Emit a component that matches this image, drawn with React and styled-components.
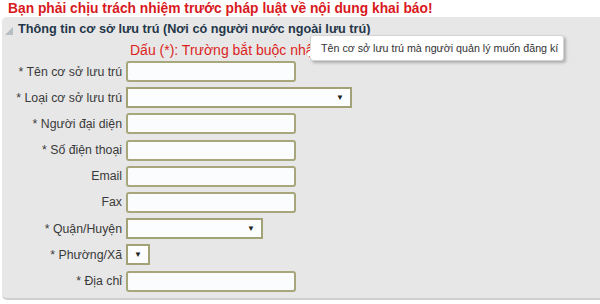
import styled, { createGlobalStyle } from 'styled-components';

const GlobalStyle = createGlobalStyle`
  html, body {
    margin: 0;
    padding: 0;
    background: #ffffff;
    font-family: "Liberation Sans", Arial, sans-serif;
  }
`;

const fields = [
  { label: '* Tên cơ sở lưu trú', kind: 'input' },
  { label: '* Loại cơ sở lưu trú', kind: 'select', width: 226 },
  { label: '* Người đại diện', kind: 'input' },
  { label: '* Số điện thoại', kind: 'input' },
  { label: 'Email', kind: 'input' },
  { label: 'Fax', kind: 'input' },
  { label: '* Quận/Huyện', kind: 'select', width: 137 },
  { label: '* Phường/Xã', kind: 'select', width: 24 },
  { label: '* Địa chỉ', kind: 'input' },
];

function App(){
  return(
    <Page>
      <GlobalStyle />
      <Warning>Bạn phải chịu trách nhiệm trước pháp luật về nội dung khai báo!</Warning>
      <Panel>
        <Legend>
          <Caret viewBox="0 0 8 8">
            <path d="M8 0 L8 8 L0 8 Z" fill="#b4bcc4" />
          </Caret>
          Thông tin cơ sở lưu trú (Nơi có người nước ngoài lưu trú)
        </Legend>
        <Note>Dấu (*): Trường bắt buộc nhập</Note>
        <Form>
          { fields.map((f) => (
            <Row key={ f.label }>
              <Label>{ f.label }</Label>
              { f.kind === 'input'
                ? <TextBox />
                : <SelectBox $width={ f.width }><Arrow>▼</Arrow></SelectBox> }
            </Row>
          )) }
        </Form>
        <Tooltip>
          <Tail />
          Tên cơ sở lưu trú mà người quản lý muốn đăng kí
        </Tooltip>
      </Panel>
    </Page>
  );
};

export default App;

const Page = styled.div`
  width: 600px;
  height: 304px;
  overflow: hidden;
  background: #ffffff;
`;

const Warning = styled.div`
  padding: 1px 0 0 8px;
  height: 16px;
  font-size: 13.8px;
  font-weight: bold;
  color: #d8191d;
  white-space: nowrap;
`;

const Panel = styled.div`
  position: relative;
  margin-left: 2px;
  width: 620px;
  background: #e7e7e7;
  border-radius: 5px 0 0 5px;
  border-bottom: 2px solid #cfcfcf;
  padding: 3px 0 6px 0;
`;

const Legend = styled.div`
  display: flex;
  align-items: center;
  gap: 5px;
  padding-left: 3px;
  height: 18px;
  font-size: 12.7px;
  font-weight: bold;
  color: #243649;
  white-space: nowrap;
`;

const Caret = styled.svg`
  width: 8px;
  height: 8px;
  margin-top: 4px;
`;

const Note = styled.div`
  margin-top: 2px;
  padding-left: 128px;
  height: 21px;
  font-size: 14px;
  color: #dc1f22;
  line-height: 20px;
  white-space: nowrap;
`;

const Form = styled.div`
  display: flex;
  flex-direction: column;
  gap: 5.2px;
`;

const Row = styled.div`
  display: grid;
  grid-template-columns: 120px auto;
  column-gap: 4px;
  align-items: center;
  height: 21px;
`;

const Label = styled.span`
  text-align: right;
  font-size: 12.3px;
  color: #3a3a3a;
  white-space: nowrap;
`;

const TextBox = styled.div`
  box-sizing: border-box;
  width: 170px;
  height: 21px;
  background: #fbfcfe;
  border: 2px solid #a8a77c;
  border-radius: 3px;
`;

const SelectBox = styled.div`
  box-sizing: border-box;
  width: ${ ({ $width }) => $width }px;
  height: 21px;
  background: #fcfdff;
  border: 2px solid #a3a276;
  display: flex;
  justify-content: flex-end;
  align-items: center;
  padding-right: 6px;
`;

const Arrow = styled.span`
  font-size: 8px;
  color: #222222;
`;

const Tooltip = styled.div`
  position: absolute;
  left: 308px;
  top: 18px;
  box-sizing: border-box;
  width: 254px;
  height: 26px;
  padding: 0 0 0 10px;
  display: flex;
  align-items: center;
  background: #ffffff;
  border: 1px solid #d4d4d4;
  border-radius: 3px;
  box-shadow: 2px 2px 3px rgba(0, 0, 0, 0.25);
  font-size: 10.7px;
  color: #333333;
  white-space: nowrap;
`;

const Tail = styled.span`
  position: absolute;
  left: -5px;
  top: 13px;
  width: 0;
  height: 0;
  border-top: 5px solid transparent;
  border-right: 6px solid #ffffff;
  border-bottom: 4px solid transparent;
`;
